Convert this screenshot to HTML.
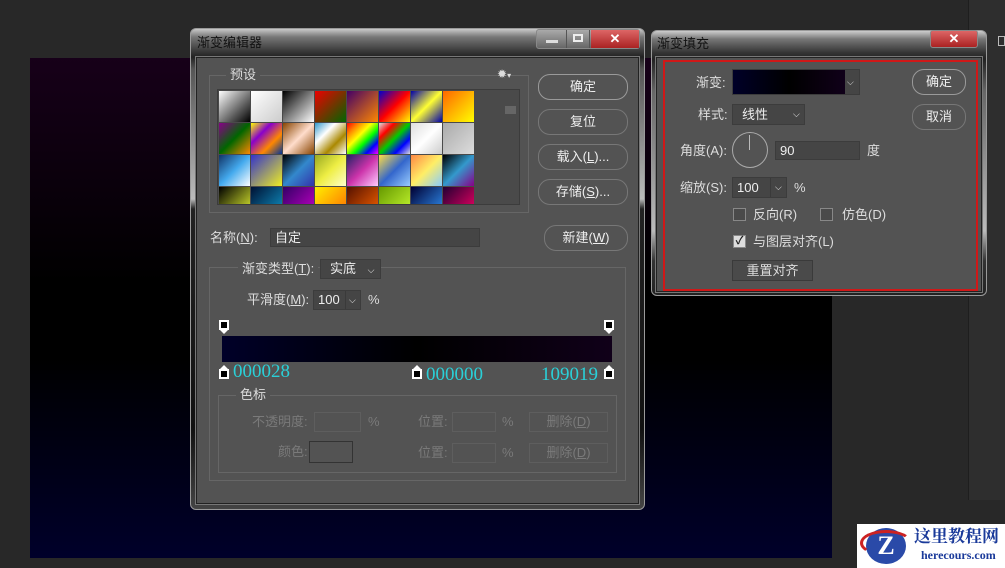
<!DOCTYPE html>
<html><head><meta charset="utf-8"><style>
*{margin:0;padding:0;box-sizing:border-box}
body{width:1005px;height:568px;background:#282828;position:relative;overflow:hidden;font-family:"Liberation Sans","Noto Sans CJK SC",sans-serif;font-size:13px;color:#ddd;line-height:15px}
.abs{position:absolute}
.canvas{left:30px;top:58px;width:802px;height:500px;background:linear-gradient(#170019 0%,#000 45%,#000 60%,#00002a 100%)}
.win{background:linear-gradient(#c8c8c8,#777 8px,#3a3a3a 22px,#222 28px,#555 40px,#bbb 170px,#222 180px,#111 400px,#444);border-radius:6px;border:1px solid #9a9a9a}
.inner{background:#535353;border:1px solid #222;box-shadow:0 0 0 1px #777}
.title{font-size:13px;color:#111}
.btn{border:1px solid #9a9a9a;border-radius:12px;color:#eee;text-align:center;font-size:13px;line-height:23px;height:26px}
.btn.dim{border-color:#777}
.field{background:#454545;border:1px solid #3c3c3c;color:#eee;padding-left:4px;font-size:13px}
.grp{border:1px solid #666}
.lbl{color:#ddd;font-size:13px;white-space:nowrap;line-height:15px}
.dis{color:#7a7a7a}
.sw{position:absolute;width:31px;height:31px}
.cb{width:13px;height:13px;border:1px solid #888;background:#4a4a4a}
.cyan{color:#2ad0d8;font-family:"Liberation Serif",serif;font-size:19px;line-height:20px}
.stop{width:10px;height:10px;border:2px solid #fff;background:#000}
</style></head><body>
<div class="abs canvas"></div>
<div class="abs" style="left:968px;top:0;width:37px;height:500px;background:#2e2e2e;border-left:1px solid #1e1e1e"></div>
<div class="abs" style="left:998px;top:36px;width:7px;height:10px;border:1px solid #bbb"></div>

<!-- Gradient editor -->
<div class="abs win" style="left:190px;top:28px;width:455px;height:482px"></div>
<div class="abs title" style="left:197px;top:35px">渐变编辑器</div>
<div class="abs" style="left:536px;top:29px;width:104px;height:20px;border:1px solid #888;border-radius:3px;background:linear-gradient(#aaa,#666)"></div>
<div class="abs" style="left:566px;top:30px;width:24px;height:18px;border-left:1px solid #555;border-right:1px solid #555"></div>
<div class="abs" style="left:573px;top:34px;width:10px;height:8px;border:2px solid #eee"></div>
<div class="abs" style="left:546px;top:40px;width:12px;height:3px;background:#ddd"></div>
<div class="abs" style="left:591px;top:30px;width:48px;height:18px;background:linear-gradient(#d66,#a22);color:#fff;text-align:center;font-weight:bold;line-height:17px">✕</div>
<div class="abs inner" style="left:196px;top:57px;width:443px;height:447px"></div>

<div class="abs grp" style="left:209px;top:75px;width:320px;height:138px"></div>
<div class="abs lbl" style="left:226px;top:67px;background:#535353;padding:0 4px">预设</div>
<div class="abs lbl" style="left:497px;top:67px;font-size:12px">✹<span style="font-size:8px">▾</span></div>
<div class="abs" style="left:217px;top:89px;width:303px;height:116px;background:#4a4a4a;border:1px solid #3c3c3c;overflow:hidden">
<div class="sw" style="left:1px;top:1px;background:linear-gradient(135deg,#fff,#000)"></div>
<div class="sw" style="left:33px;top:1px;background:linear-gradient(135deg,#fff,#ccc)"></div>
<div class="sw" style="left:65px;top:1px;background:linear-gradient(135deg,#000,#fff)"></div>
<div class="sw" style="left:97px;top:1px;background:linear-gradient(135deg,#e00,#060)"></div>
<div class="sw" style="left:129px;top:1px;background:linear-gradient(135deg,#406,#f80)"></div>
<div class="sw" style="left:161px;top:1px;background:linear-gradient(135deg,#00c,#f00,#ff0)"></div>
<div class="sw" style="left:193px;top:1px;background:linear-gradient(135deg,#00a,#ff3,#00a)"></div>
<div class="sw" style="left:225px;top:1px;background:linear-gradient(135deg,#f60,#ff0)"></div>
<div class="sw" style="left:1px;top:33px;background:linear-gradient(135deg,#808,#060,#f80)"></div>
<div class="sw" style="left:33px;top:33px;background:linear-gradient(135deg,#ff0,#80c,#f80,#039)"></div>
<div class="sw" style="left:65px;top:33px;background:linear-gradient(135deg,#840,#fdc,#840)"></div>
<div class="sw" style="left:97px;top:33px;background:linear-gradient(135deg,#39c,#fff,#a80,#fff)"></div>
<div class="sw" style="left:129px;top:33px;background:linear-gradient(135deg,#f00,#f80,#ff0,#0f0,#00f,#f0f)"></div>
<div class="sw" style="left:161px;top:33px;background:linear-gradient(135deg,#ddd,#f00,#0c0,#00f,#ddd)"></div>
<div class="sw" style="left:193px;top:33px;background:linear-gradient(135deg,#ddd,#fff,#ccc)"></div>
<div class="sw" style="left:225px;top:33px;background:linear-gradient(135deg,#aaa,#ddd)"></div>
<div class="sw" style="left:1px;top:65px;background:linear-gradient(135deg,#136,#4ae,#fff)"></div>
<div class="sw" style="left:33px;top:65px;background:linear-gradient(135deg,#33c,#ee2)"></div>
<div class="sw" style="left:65px;top:65px;background:linear-gradient(135deg,#000,#38c,#33a)"></div>
<div class="sw" style="left:97px;top:65px;background:linear-gradient(135deg,#9a2,#ee4,#ffc)"></div>
<div class="sw" style="left:129px;top:65px;background:linear-gradient(135deg,#226,#c3a,#fcf)"></div>
<div class="sw" style="left:161px;top:65px;background:linear-gradient(135deg,#fd4,#36c,#9cf)"></div>
<div class="sw" style="left:193px;top:65px;background:linear-gradient(135deg,#f84,#fe6,#8cf)"></div>
<div class="sw" style="left:225px;top:65px;background:linear-gradient(135deg,#000,#39c,#808)"></div>
<div class="sw" style="left:1px;top:97px;background:linear-gradient(135deg,#000,#ef3)"></div>
<div class="sw" style="left:33px;top:97px;background:linear-gradient(135deg,#013,#19c)"></div>
<div class="sw" style="left:65px;top:97px;background:linear-gradient(135deg,#306,#c0c)"></div>
<div class="sw" style="left:97px;top:97px;background:linear-gradient(135deg,#fe0,#f60)"></div>
<div class="sw" style="left:129px;top:97px;background:linear-gradient(135deg,#510,#f60)"></div>
<div class="sw" style="left:161px;top:97px;background:linear-gradient(135deg,#690,#cf3)"></div>
<div class="sw" style="left:193px;top:97px;background:linear-gradient(135deg,#003,#39f)"></div>
<div class="sw" style="left:225px;top:97px;background:linear-gradient(135deg,#203,#f06)"></div>
<div class="abs" style="left:287px;top:16px;width:11px;height:8px;background:#666"></div>
</div>

<div class="abs btn" style="left:538px;top:74px;width:90px">确定</div>
<div class="abs btn dim" style="left:538px;top:109px;width:90px">复位</div>
<div class="abs btn dim" style="left:538px;top:144px;width:90px">载入(<u>L</u>)...</div>
<div class="abs btn dim" style="left:538px;top:179px;width:90px">存储(<u>S</u>)...</div>
<div class="abs btn dim" style="left:544px;top:225px;width:84px">新建(<u>W</u>)</div>

<div class="abs lbl" style="left:210px;top:230px">名称(<u>N</u>):</div>
<div class="abs field" style="left:270px;top:228px;width:210px;height:19px;line-height:17px">自定</div>

<div class="abs grp" style="left:209px;top:267px;width:417px;height:214px"></div>
<div class="abs lbl" style="left:238px;top:261px;background:#535353;padding:0 4px">渐变类型(<u>T</u>):</div>
<div class="abs field" style="left:320px;top:259px;width:61px;height:20px;line-height:18px;padding-left:9px">实底 <span style="font-size:9px;margin-left:8px">⌵</span></div>
<div class="abs lbl" style="left:247px;top:292px">平滑度(<u>M</u>):</div>
<div class="abs field" style="left:313px;top:290px;width:48px;height:20px;line-height:18px">100<span style="position:absolute;left:31px;top:0;border-left:1px solid #3a3a3a;padding-left:3px;font-size:9px;height:18px">⌵</span></div>
<div class="abs lbl" style="left:368px;top:292px">%</div>

<div class="abs stop" style="left:219px;top:320px"></div><div class="abs" style="left:220px;top:330px;border:4px solid transparent;border-top:4px solid #fff"></div>
<div class="abs stop" style="left:604px;top:320px"></div><div class="abs" style="left:605px;top:330px;border:4px solid transparent;border-top:4px solid #fff"></div>
<div class="abs" style="left:222px;top:336px;width:390px;height:26px;background:linear-gradient(90deg,#000028,#000 50%,#100019)"></div>
<div class="abs" style="left:219px;top:365px;border:5px solid transparent;border-bottom:5px solid #fff;border-top:0"></div><div class="abs stop" style="left:219px;top:369px"></div>
<div class="abs" style="left:412px;top:365px;border:5px solid transparent;border-bottom:5px solid #fff;border-top:0"></div><div class="abs stop" style="left:412px;top:369px"></div>
<div class="abs" style="left:604px;top:365px;border:5px solid transparent;border-bottom:5px solid #fff;border-top:0"></div><div class="abs stop" style="left:604px;top:369px"></div>
<div class="abs cyan" style="left:233px;top:362px">000028</div>
<div class="abs cyan" style="left:426px;top:365px">000000</div>
<div class="abs cyan" style="left:541px;top:365px">109019</div>

<div class="abs grp" style="left:218px;top:395px;width:399px;height:78px"></div>
<div class="abs lbl" style="left:236px;top:387px;background:#535353;padding:0 4px">色标</div>
<div class="abs lbl dis" style="left:252px;top:414px">不透明度:</div>
<div class="abs" style="left:314px;top:412px;width:47px;height:20px;border:1px solid #5e5e5e"></div>
<div class="abs lbl dis" style="left:368px;top:414px">%</div>
<div class="abs lbl dis" style="left:278px;top:444px">颜色:</div>
<div class="abs" style="left:309px;top:441px;width:44px;height:22px;border:1px solid #333"></div>
<div class="abs lbl dis" style="left:418px;top:414px">位置:</div>
<div class="abs" style="left:452px;top:412px;width:44px;height:20px;border:1px solid #5e5e5e"></div>
<div class="abs lbl dis" style="left:502px;top:414px">%</div>
<div class="abs lbl dis" style="left:418px;top:445px">位置:</div>
<div class="abs" style="left:452px;top:443px;width:44px;height:20px;border:1px solid #5e5e5e"></div>
<div class="abs lbl dis" style="left:502px;top:445px">%</div>
<div class="abs lbl dis" style="left:529px;top:412px;width:79px;height:20px;border:1px solid #5e5e5e;text-align:center;line-height:18px">删除(<u>D</u>)</div>
<div class="abs lbl dis" style="left:529px;top:443px;width:79px;height:20px;border:1px solid #5e5e5e;text-align:center;line-height:18px">删除(<u>D</u>)</div>

<!-- Gradient fill -->
<div class="abs win" style="left:651px;top:30px;width:336px;height:266px;background:linear-gradient(#ccc,#777 8px,#333 22px,#222 28px,#666 60px,#bbb 200px,#333 230px,#222)"></div>
<div class="abs title" style="left:657px;top:36px">渐变填充</div>
<div class="abs" style="left:930px;top:30px;width:48px;height:18px;border:1px solid #888;border-radius:3px;background:linear-gradient(#d66,#a22);color:#fff;text-align:center;font-weight:bold;line-height:16px">✕</div>
<div class="abs inner" style="left:656px;top:57px;width:326px;height:235px"></div>
<div class="abs" style="left:663px;top:60px;width:315px;height:231px;border:2px solid #d01818"></div>
<div class="abs lbl" style="left:696px;top:75px">渐变:</div>
<div class="abs" style="left:732px;top:69px;width:128px;height:26px;border:1px solid #3c3c3c;background:#454545"></div>
<div class="abs" style="left:733px;top:70px;width:112px;height:24px;background:linear-gradient(90deg,#000028,#000 50%,#100019)"></div>
<div class="abs lbl" style="left:847px;top:75px;font-size:9px">⌵</div>
<div class="abs lbl" style="left:698px;top:107px">样式:</div>
<div class="abs field" style="left:732px;top:104px;width:73px;height:21px;line-height:19px;padding-left:9px">线性<span style="position:absolute;left:60px;font-size:9px">⌵</span></div>
<div class="abs lbl" style="left:680px;top:143px">角度(A):</div>
<div class="abs" style="left:732px;top:132px;width:36px;height:36px;border:1px solid #aaa;border-radius:50%"></div>
<div class="abs" style="left:749px;top:135px;width:1px;height:15px;background:#bbb"></div>
<div class="abs field" style="left:775px;top:141px;width:85px;height:19px;line-height:17px">90</div>
<div class="abs lbl" style="left:867px;top:143px">度</div>
<div class="abs lbl" style="left:680px;top:180px">缩放(S):</div>
<div class="abs field" style="left:732px;top:177px;width:55px;height:21px;line-height:19px">100<span style="position:absolute;left:37px;top:0;border-left:1px solid #3a3a3a;padding-left:4px;font-size:9px;height:19px">⌵</span></div>
<div class="abs lbl" style="left:794px;top:180px">%</div>
<div class="abs cb" style="left:733px;top:208px"></div>
<div class="abs lbl" style="left:753px;top:207px">反向(R)</div>
<div class="abs cb" style="left:820px;top:208px"></div>
<div class="abs lbl" style="left:842px;top:207px">仿色(D)</div>
<div class="abs cb" style="left:733px;top:235px;background:#ddd;color:#222;font-size:11px;line-height:11px;text-align:center;font-weight:bold">✓</div>
<div class="abs lbl" style="left:753px;top:234px">与图层对齐(L)</div>
<div class="abs lbl" style="left:732px;top:260px;width:81px;height:21px;border:1px solid #3a3a3a;background:#4a4a4a;text-align:center;line-height:19px">重置对齐</div>
<div class="abs btn" style="left:912px;top:69px;width:54px">确定</div>
<div class="abs btn dim" style="left:912px;top:104px;width:54px">取消</div>

<!-- watermark -->
<div class="abs" style="left:857px;top:524px;width:148px;height:44px;background:#fff"></div>
<div class="abs" style="left:866px;top:528px;width:40px;height:36px;border-radius:50%;background:#2a4aa8;color:#fff;font-weight:bold;font-size:26px;text-align:center;line-height:36px;font-family:'Liberation Serif',serif">Z</div>
<div class="abs" style="left:860px;top:530px;width:52px;height:26px;border:3px solid #c22;border-radius:50%;border-right-color:transparent;border-bottom-color:transparent"></div>
<div class="abs" style="left:914px;top:527px;color:#1a3a9a;font-weight:bold;font-size:17px;line-height:20px;font-family:'Liberation Serif','Noto Serif CJK SC',serif">这里教程网</div>
<div class="abs" style="left:921px;top:548px;color:#1a3a9a;font-weight:bold;font-size:12px;line-height:14px;font-family:'Liberation Serif',serif">herecours.com</div>
</body></html>
